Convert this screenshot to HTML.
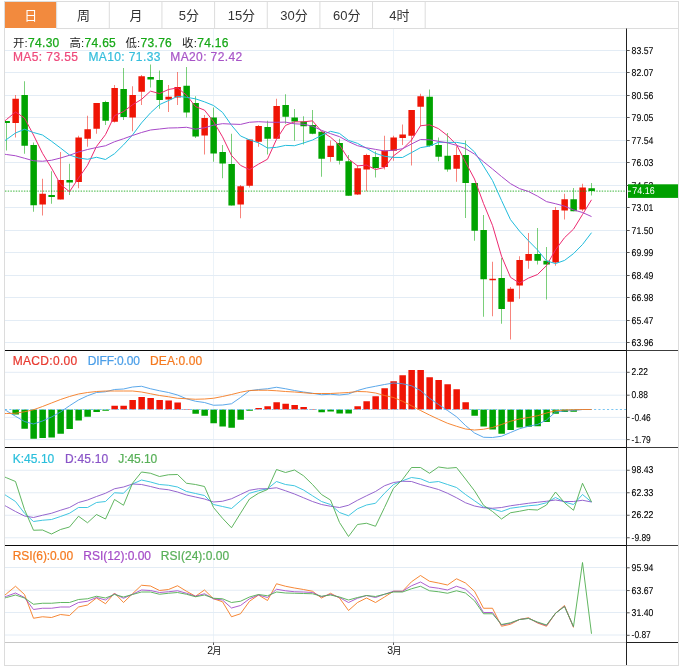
<!DOCTYPE html>
<html lang="zh"><head><meta charset="utf-8"><title>K线图</title>
<style>html,body{margin:0;padding:0;background:#fff}body{width:684px;height:667px;overflow:hidden}</style></head>
<body>
<svg width="684" height="667" viewBox="0 0 684 667" style="display:block;will-change:transform">
<defs><clipPath id="cp"><rect x="5" y="28" width="621.5" height="616"/></clipPath></defs>
<rect width="684" height="667" fill="#fff"/>
<path d="M213.50 28V642.5M393.50 28V642.5" stroke="#ecf3f9" stroke-width="1" fill="none"/>
<path d="M5 50.50H626.5M5 72.50H626.5M5 95.50H626.5M5 117.50H626.5M5 140.50H626.5M5 162.50H626.5M5 185.50H626.5M5 207.50H626.5M5 230.50H626.5M5 252.50H626.5M5 275.50H626.5M5 297.50H626.5M5 320.50H626.5M5 342.50H626.5M5 372.30H626.5M5 395.20H626.5M5 417.40H626.5M5 439.60H626.5M5 470.25H626.5M5 492.75H626.5M5 515.25H626.5M5 537.75H626.5M5 567.50H626.5M5 590.25H626.5M5 612.50H626.5M5 635.00H626.5" stroke="#e3ecf5" stroke-width="1" fill="none"/>
<rect x="4.5" y="1.5" width="674.0" height="664.0" fill="none" stroke="#dcdcdc" stroke-width="1"/>
<rect x="5" y="2" width="51.2" height="26" fill="#f28a3e"/>
<path d="M56.65 2V28M109.30 2V28M161.95 2V28M214.60 2V28M267.25 2V28M319.90 2V28M372.55 2V28M425.20 2V28M56.2 28.5H678" stroke="#dcdcdc" stroke-width="1" fill="none"/>
<g font-family="'Liberation Sans','Noto Sans CJK SC',sans-serif" font-size="13" text-anchor="middle" fill="#333">
<text x="30.8" y="20" fill="#fff">日</text>
<text x="83.5" y="20">周</text>
<text x="136.1" y="20">月</text>
<text x="188.8" y="20">5分</text>
<text x="241.4" y="20">15分</text>
<text x="294.1" y="20">30分</text>
<text x="346.7" y="20">60分</text>
<text x="399.4" y="20">4时</text>
</g>
<path d="M5 350.5H626.5M5 447.5H626.5M5 545.5H626.5" stroke="#0a0a0a" stroke-width="1" fill="none"/>
<path d="M626.5 350.5H678M626.5 447.5H678M626.5 545.5H678" stroke="#3c3c3c" stroke-width="1" fill="none"/>
<path d="M5 642.5H626.5" stroke="#c8c8c8" stroke-width="1" fill="none"/>
<path d="M626.5 642.5H678" stroke="#222" stroke-width="1" fill="none"/>
<g clip-path="url(#cp)">
<path d="M15.50 95.00V137.50M42.50 178.75V215.50M60.50 152.00V199.50M78.50 135.75V188.25M87.50 115.75V146.75M96.50 103.00V133.75M114.50 85.00V122.50M132.50 86.25V131.25M141.50 75.00V105.00M168.50 85.00V112.00M177.50 72.00V105.00M204.50 115.00V154.50M240.50 185.00V218.25M249.50 139.50V187.50M258.50 125.00V146.75M276.50 98.75V138.75M330.50 140.50V161.75M357.50 165.00V195.00M366.50 153.75V191.25M384.50 135.75V169.50M393.50 135.75V160.75M402.50 124.50V145.00M411.50 110.00V165.50M420.50 93.75V126.25M456.50 146.25V181.75M492.50 261.75V316.25M510.50 287.00V339.50M519.50 256.25V298.75M528.50 233.00V268.75M555.50 207.00V265.75M564.50 193.75V219.50M582.50 183.75V211.25" stroke="#ef1505" stroke-width="1" stroke-opacity=".52" fill="none"/>
<path d="M6.50 121.00V150.50M24.50 81.25V153.75M33.50 142.50V211.75M51.50 171.25V203.75M69.50 163.75V195.00M105.50 100.75V125.00M123.50 68.00V120.00M150.50 64.50V87.50M159.50 70.50V108.75M186.50 67.00V117.50M195.50 96.25V138.00M213.50 107.50V161.75M222.50 145.00V178.25M231.50 133.75V205.50M267.50 120.75V154.50M285.50 94.25V123.75M294.50 109.00V140.75M303.50 116.25V144.50M312.50 110.00V134.25M321.50 131.75V176.75M339.50 138.75V164.50M348.50 155.00V195.75M375.50 151.25V177.50M429.50 89.50V146.75M438.50 137.50V161.25M447.50 133.00V171.75M465.50 140.50V218.00M474.50 183.00V240.75M483.50 215.00V316.75M501.50 258.00V323.75M537.50 228.00V264.50M546.50 247.00V299.50M573.50 188.00V211.25M591.50 183.00V195.50" stroke="#00a300" stroke-width="1" stroke-opacity=".52" fill="none"/>
<path d="M12.40 98.75h6.50V123.00h-6.50zM39.40 193.75h6.50V204.50h-6.50zM57.40 180.00h6.50V199.50h-6.50zM75.40 137.50h6.50V182.00h-6.50zM84.40 129.25h6.50V138.75h-6.50zM93.40 103.00h6.50V128.75h-6.50zM111.40 88.00h6.50V121.75h-6.50zM129.40 95.00h6.50V117.50h-6.50zM138.40 76.25h6.50V91.75h-6.50zM165.40 96.75h6.50V99.50h-6.50zM174.40 87.00h6.50V97.50h-6.50zM201.40 118.00h6.50V135.50h-6.50zM237.40 186.25h6.50V204.50h-6.50zM246.40 139.50h6.50V185.75h-6.50zM255.40 126.00h6.50V141.75h-6.50zM273.40 106.00h6.50V138.75h-6.50zM327.40 145.75h6.50V157.00h-6.50zM354.40 168.25h6.50V194.50h-6.50zM363.40 155.00h6.50V169.50h-6.50zM381.40 150.50h6.50V167.00h-6.50zM390.40 137.50h6.50V150.75h-6.50zM399.40 134.50h6.50V138.00h-6.50zM408.40 110.00h6.50V135.75h-6.50zM417.40 96.25h6.50V106.75h-6.50zM453.40 155.00h6.50V168.75h-6.50zM489.40 278.75h6.50V280.25h-6.50zM507.40 288.75h6.50V301.75h-6.50zM516.40 260.00h6.50V285.50h-6.50zM525.40 254.00h6.50V260.75h-6.50zM552.40 210.00h6.50V262.50h-6.50zM561.40 199.25h6.50V210.50h-6.50zM579.40 187.50h6.50V209.50h-6.50z" fill="#ef1505"/>
<path d="M3.40 121.00h6.50V123.00h-6.50zM21.40 95.00h6.50V145.75h-6.50zM30.40 145.00h6.50V205.25h-6.50zM48.40 195.00h6.50V197.00h-6.50zM66.40 180.00h6.50V182.50h-6.50zM102.40 102.00h6.50V120.75h-6.50zM120.40 89.00h6.50V117.00h-6.50zM147.40 77.00h6.50V79.50h-6.50zM156.40 80.00h6.50V100.00h-6.50zM183.40 85.75h6.50V112.50h-6.50zM192.40 103.00h6.50V136.50h-6.50zM210.40 117.50h6.50V153.50h-6.50zM219.40 152.00h6.50V163.50h-6.50zM228.40 164.00h6.50V205.50h-6.50zM264.40 127.00h6.50V138.75h-6.50zM282.40 105.00h6.50V116.75h-6.50zM291.40 117.50h6.50V121.50h-6.50zM300.40 121.50h6.50V126.25h-6.50zM309.40 125.00h6.50V133.75h-6.50zM318.40 131.75h6.50V158.75h-6.50zM336.40 143.00h6.50V160.75h-6.50zM345.40 161.25h6.50V195.75h-6.50zM372.40 157.00h6.50V168.00h-6.50zM426.40 96.75h6.50V145.75h-6.50zM435.40 145.00h6.50V156.75h-6.50zM444.40 155.75h6.50V169.50h-6.50zM462.40 155.00h6.50V183.00h-6.50zM471.40 183.00h6.50V230.75h-6.50zM480.40 230.00h6.50V279.25h-6.50zM498.40 278.00h6.50V309.00h-6.50zM534.40 254.00h6.50V260.75h-6.50zM543.40 260.75h6.50V264.50h-6.50zM570.40 199.25h6.50V211.25h-6.50zM588.40 188.25h6.50V191.00h-6.50z" fill="#00a300"/>
<path d="M5 191.2H626.5" stroke="#00a000" stroke-opacity=".62" stroke-width="1.2" stroke-dasharray="1.45 1.25" fill="none"/>
<polyline points="4.00,121.58 6.50,119.50 15.50,112.00 24.50,118.00 33.50,135.00 42.50,153.30 51.50,168.10 60.50,184.35 69.50,191.70 78.50,178.15 87.50,165.25 96.50,146.45 105.50,134.60 114.50,115.70 123.50,111.60 132.50,104.75 141.50,99.40 150.50,91.15 159.50,93.55 168.50,89.50 177.50,87.90 186.50,95.15 195.50,106.55 204.50,110.15 213.50,121.50 222.50,136.80 231.50,155.40 240.50,165.35 249.50,169.65 258.50,164.15 267.50,159.20 276.50,139.30 285.50,125.40 294.50,121.80 303.50,121.85 312.50,120.85 321.50,131.40 330.50,137.20 339.50,145.05 348.50,158.95 357.50,165.85 366.50,165.10 375.50,169.55 384.50,167.50 393.50,155.85 402.50,149.10 411.50,140.10 420.50,125.75 429.50,124.80 438.50,128.65 447.50,135.65 456.50,144.65 465.50,162.00 474.50,179.00 483.50,203.50 492.50,225.35 501.50,256.15 510.50,277.30 519.50,283.15 528.50,278.10 537.50,274.50 546.50,265.60 555.50,249.85 564.50,237.70 573.50,229.15 582.50,214.50 591.50,199.80" fill="none" stroke="#ec2a70" stroke-width="1.0" stroke-linejoin="round"/>
<polyline points="4.00,141.31 6.50,139.50 15.50,133.00 24.50,129.25 33.50,132.50 42.50,135.00 51.50,141.25 60.50,148.00 69.50,155.00 78.50,158.00 87.50,159.28 96.50,157.28 105.50,159.47 114.50,153.70 123.50,144.88 132.50,135.00 141.50,122.92 150.50,112.88 159.50,104.62 168.50,100.55 177.50,96.33 186.50,97.28 195.50,98.85 204.50,101.85 213.50,105.50 222.50,112.35 231.50,125.28 240.50,135.95 249.50,139.90 258.50,142.82 267.50,148.00 276.50,147.35 285.50,145.38 294.50,145.72 303.50,143.00 312.50,140.03 321.50,135.35 330.50,131.30 339.50,133.43 348.50,140.40 357.50,143.35 366.50,148.25 375.50,153.38 384.50,156.28 393.50,157.40 402.50,157.47 411.50,152.60 420.50,147.65 429.50,146.15 438.50,142.25 447.50,142.38 456.50,142.38 465.50,143.88 474.50,151.90 483.50,166.07 492.50,180.50 501.50,200.40 510.50,219.65 519.50,231.07 528.50,240.80 537.50,249.93 546.50,260.88 555.50,263.57 564.50,260.43 573.50,253.62 582.50,244.50 591.50,232.70" fill="none" stroke="#22bcdc" stroke-width="1.0" stroke-linejoin="round"/>
<polyline points="4.00,154.15 6.50,154.50 15.50,155.75 24.50,158.25 33.50,160.75 42.50,161.25 51.50,160.25 60.50,158.00 69.50,155.25 78.50,152.00 87.50,149.50 96.50,147.50 105.50,145.75 114.50,141.75 123.50,138.75 132.50,135.50 141.50,132.50 150.50,130.00 159.50,129.00 168.50,128.00 177.50,127.80 186.50,127.28 195.50,129.16 204.50,127.78 213.50,125.19 222.50,123.67 231.50,124.10 240.50,124.41 249.50,122.26 258.50,121.69 267.50,122.16 276.50,122.31 285.50,122.11 294.50,123.79 303.50,124.25 312.50,126.19 321.50,130.31 330.50,133.62 339.50,136.66 348.50,141.61 357.50,145.68 366.50,147.80 375.50,149.38 384.50,151.00 393.50,150.20 402.50,148.75 411.50,143.97 420.50,139.47 429.50,139.79 438.50,141.32 447.50,142.86 456.50,145.31 465.50,148.62 474.50,154.09 483.50,161.74 492.50,168.99 501.50,176.50 510.50,183.65 519.50,188.61 528.50,191.53 537.50,196.15 546.50,201.62 555.50,203.72 564.50,206.16 573.50,209.85 582.50,212.50 591.50,216.55" fill="none" stroke="#a848c8" stroke-width="1.0" stroke-linejoin="round"/>
<path d="M111.40 405.75h6.50V409.50h-6.50zM120.40 405.75h6.50V409.50h-6.50zM129.40 400.00h6.50V409.50h-6.50zM138.40 397.00h6.50V409.50h-6.50zM147.40 398.00h6.50V409.50h-6.50zM156.40 400.00h6.50V409.50h-6.50zM165.40 400.50h6.50V409.50h-6.50zM174.40 402.50h6.50V409.50h-6.50zM183.40 409.00h6.50V409.50h-6.50zM255.40 408.00h6.50V409.50h-6.50zM264.40 406.25h6.50V409.50h-6.50zM273.40 402.25h6.50V409.50h-6.50zM282.40 403.75h6.50V409.50h-6.50zM291.40 405.00h6.50V409.50h-6.50zM300.40 407.00h6.50V409.50h-6.50zM309.40 409.00h6.50V409.50h-6.50zM354.40 406.25h6.50V409.50h-6.50zM363.40 401.25h6.50V409.50h-6.50zM372.40 396.25h6.50V409.50h-6.50zM381.40 388.25h6.50V409.50h-6.50zM390.40 381.25h6.50V409.50h-6.50zM399.40 375.25h6.50V409.50h-6.50zM408.40 370.00h6.50V409.50h-6.50zM417.40 370.00h6.50V409.50h-6.50zM426.40 377.25h6.50V409.50h-6.50zM435.40 380.00h6.50V409.50h-6.50zM444.40 384.25h6.50V409.50h-6.50zM453.40 389.25h6.50V409.50h-6.50zM462.40 402.25h6.50V409.50h-6.50z" fill="#ef1505"/>
<path d="M12.40 409.50h6.50V414.50h-6.50zM21.40 409.50h6.50V428.75h-6.50zM30.40 409.50h6.50V438.75h-6.50zM39.40 409.50h6.50V438.00h-6.50zM48.40 409.50h6.50V437.50h-6.50zM57.40 409.50h6.50V433.75h-6.50zM66.40 409.50h6.50V429.00h-6.50zM75.40 409.50h6.50V420.50h-6.50zM84.40 409.50h6.50V416.75h-6.50zM93.40 409.50h6.50V412.00h-6.50zM102.40 409.50h6.50V410.75h-6.50zM192.40 409.50h6.50V413.75h-6.50zM201.40 409.50h6.50V415.75h-6.50zM210.40 409.50h6.50V423.25h-6.50zM219.40 409.50h6.50V426.50h-6.50zM228.40 409.50h6.50V427.75h-6.50zM237.40 409.50h6.50V419.75h-6.50zM246.40 409.50h6.50V410.75h-6.50zM318.40 409.50h6.50V412.25h-6.50zM327.40 409.50h6.50V411.50h-6.50zM336.40 409.50h6.50V413.50h-6.50zM345.40 409.50h6.50V413.50h-6.50zM471.40 409.50h6.50V415.75h-6.50zM480.40 409.50h6.50V426.50h-6.50zM489.40 409.50h6.50V429.50h-6.50zM498.40 409.50h6.50V433.75h-6.50zM507.40 409.50h6.50V430.00h-6.50zM516.40 409.50h6.50V427.50h-6.50zM525.40 409.50h6.50V426.75h-6.50zM534.40 409.50h6.50V426.25h-6.50zM543.40 409.50h6.50V422.00h-6.50zM552.40 409.50h6.50V413.75h-6.50zM561.40 409.50h6.50V412.00h-6.50zM570.40 409.50h6.50V411.75h-6.50z" fill="#00a300"/>
<path d="M5 409.5H626.5" stroke="#7cc6f2" stroke-width="1" stroke-dasharray="2.1 2.2" fill="none"/>
<polyline points="4.00,409.22 6.50,410.75 15.50,416.25 24.50,421.50 33.50,424.00 42.50,421.00 51.50,417.00 60.50,412.00 69.50,405.75 78.50,400.00 87.50,395.75 96.50,392.50 105.50,391.75 114.50,389.50 123.50,389.00 132.50,387.00 141.50,386.25 150.50,388.75 159.50,390.75 168.50,392.50 177.50,395.00 186.50,398.75 195.50,401.25 204.50,402.50 213.50,405.25 222.50,405.00 231.50,403.75 240.50,397.50 249.50,390.75 258.50,389.50 267.50,388.75 276.50,387.25 285.50,388.75 294.50,390.50 303.50,392.00 312.50,393.25 321.50,394.75 330.50,394.25 339.50,395.00 348.50,394.00 357.50,390.50 366.50,388.00 375.50,386.25 384.50,384.50 393.50,383.00 402.50,383.75 411.50,385.75 420.50,390.50 429.50,398.25 438.50,404.50 447.50,410.50 456.50,416.75 465.50,425.50 474.50,433.00 483.50,437.25 492.50,437.50 501.50,436.25 510.50,432.50 519.50,428.75 528.50,426.25 537.50,424.50 546.50,420.00 555.50,412.00 564.50,411.00 573.50,410.50 582.50,409.50 591.50,409.50" fill="none" stroke="#4a9ee8" stroke-width="0.9" stroke-linejoin="round"/>
<polyline points="4.00,413.57 6.50,413.50 15.50,413.25 24.50,411.75 33.50,409.75 42.50,406.50 51.50,403.00 60.50,399.50 69.50,396.50 78.50,394.00 87.50,392.50 96.50,391.50 105.50,391.00 114.50,391.00 123.50,391.00 132.50,391.00 141.50,392.00 150.50,393.75 159.50,395.50 168.50,396.75 177.50,398.25 186.50,398.75 195.50,399.25 204.50,399.00 213.50,398.25 222.50,396.50 231.50,394.50 240.50,392.25 249.50,390.50 258.50,390.25 267.50,390.25 276.50,390.75 285.50,391.50 294.50,392.00 303.50,392.75 312.50,393.50 321.50,393.50 330.50,393.50 339.50,393.00 348.50,392.50 357.50,391.50 366.50,391.75 375.50,393.00 384.50,395.50 393.50,397.50 402.50,401.25 411.50,405.75 420.50,410.50 429.50,415.00 438.50,419.25 447.50,423.25 456.50,426.25 465.50,429.00 474.50,430.00 483.50,429.25 492.50,427.50 501.50,424.50 510.50,421.25 519.50,419.00 528.50,417.50 537.50,415.75 546.50,413.00 555.50,410.75 564.50,410.00 573.50,409.75 582.50,409.50 591.50,409.50" fill="none" stroke="#f57a20" stroke-width="0.9" stroke-linejoin="round"/>
<polyline points="4.00,494.15 6.50,495.75 15.50,501.50 24.50,513.25 33.50,521.50 42.50,520.25 51.50,519.50 60.50,516.50 69.50,513.25 78.50,507.50 87.50,507.50 96.50,502.50 105.50,501.50 114.50,492.75 123.50,493.25 132.50,484.00 141.50,480.00 150.50,482.00 159.50,484.50 168.50,485.25 177.50,487.00 186.50,491.50 195.50,493.50 204.50,495.50 213.50,504.50 222.50,506.50 231.50,508.50 240.50,500.75 249.50,493.25 258.50,490.75 267.50,488.75 276.50,481.50 285.50,484.50 294.50,485.75 303.50,490.00 312.50,495.75 321.50,501.50 330.50,504.50 339.50,512.50 348.50,515.75 357.50,508.75 366.50,505.00 375.50,503.25 384.50,493.25 393.50,484.50 402.50,480.75 411.50,477.50 420.50,478.75 429.50,482.50 438.50,481.50 447.50,484.50 456.50,487.50 465.50,494.50 474.50,500.75 483.50,507.00 492.50,509.00 501.50,511.50 510.50,508.25 519.50,507.00 528.50,505.75 537.50,505.00 546.50,502.75 555.50,497.50 564.50,502.00 573.50,504.50 582.50,494.50 591.50,502.00" fill="none" stroke="#2bbfdc" stroke-width="0.9" stroke-linejoin="round"/>
<polyline points="4.00,505.11 6.50,506.50 15.50,511.50 24.50,516.00 33.50,517.50 42.50,515.25 51.50,513.25 60.50,510.25 69.50,507.50 78.50,502.50 87.50,500.00 96.50,496.50 105.50,493.25 114.50,488.75 123.50,487.00 132.50,484.00 141.50,484.50 150.50,486.50 159.50,488.75 168.50,489.75 177.50,492.00 186.50,495.00 195.50,497.00 204.50,499.00 213.50,502.00 222.50,501.25 231.50,498.75 240.50,494.50 249.50,490.25 258.50,488.75 267.50,488.75 276.50,487.75 285.50,490.75 294.50,494.00 303.50,497.75 312.50,501.50 321.50,504.50 330.50,506.25 339.50,507.50 348.50,505.25 357.50,500.25 366.50,495.75 375.50,491.50 384.50,485.75 393.50,482.50 402.50,481.25 411.50,481.50 420.50,484.50 429.50,487.00 438.50,489.50 447.50,493.25 456.50,497.75 465.50,502.75 474.50,506.00 483.50,507.75 492.50,508.25 501.50,507.50 510.50,505.75 519.50,504.50 528.50,503.25 537.50,502.25 546.50,501.25 555.50,500.00 564.50,501.50 573.50,501.50 582.50,500.25 591.50,502.00" fill="none" stroke="#8a55c8" stroke-width="0.9" stroke-linejoin="round"/>
<polyline points="4.00,476.71 6.50,477.75 15.50,481.50 24.50,509.50 33.50,530.25 42.50,530.00 51.50,534.00 60.50,529.50 69.50,527.00 78.50,516.25 87.50,522.75 96.50,514.50 105.50,519.00 114.50,499.50 123.50,505.25 132.50,483.25 141.50,472.00 150.50,473.25 159.50,476.50 168.50,474.75 177.50,474.50 186.50,483.25 195.50,484.50 204.50,486.50 213.50,507.50 222.50,518.25 231.50,527.75 240.50,513.25 249.50,499.00 258.50,493.25 267.50,489.50 276.50,469.50 285.50,472.50 294.50,470.00 303.50,475.75 312.50,484.50 321.50,494.50 330.50,500.00 339.50,522.50 348.50,536.50 357.50,524.50 366.50,523.25 375.50,526.25 384.50,507.50 393.50,488.25 402.50,479.50 411.50,467.50 420.50,467.50 429.50,473.25 438.50,467.00 447.50,468.25 456.50,467.50 465.50,479.00 474.50,490.75 483.50,505.25 492.50,511.50 501.50,519.00 510.50,512.75 519.50,511.25 528.50,509.50 537.50,510.00 546.50,505.00 555.50,492.00 564.50,502.75 573.50,510.25 582.50,483.25 591.50,502.00" fill="none" stroke="#4fae4f" stroke-width="0.9" stroke-linejoin="round"/>
<polyline points="4.00,595.83 6.50,593.75 15.50,586.25 24.50,594.50 33.50,618.25 42.50,616.75 51.50,617.50 60.50,614.50 69.50,615.50 78.50,607.00 87.50,605.00 96.50,598.00 105.50,603.75 114.50,593.00 123.50,602.50 132.50,593.75 141.50,585.25 150.50,586.00 159.50,590.50 168.50,589.50 177.50,585.75 186.50,591.25 195.50,596.25 204.50,590.00 213.50,598.75 222.50,601.75 231.50,616.75 240.50,613.75 249.50,601.25 258.50,595.00 267.50,600.50 276.50,583.75 285.50,586.25 294.50,588.00 303.50,589.50 312.50,591.25 321.50,598.00 330.50,593.25 339.50,598.00 348.50,610.50 357.50,602.50 366.50,598.00 375.50,602.50 384.50,597.00 393.50,591.25 402.50,591.25 411.50,581.75 420.50,575.50 429.50,581.25 438.50,583.00 447.50,585.00 456.50,578.75 465.50,583.00 474.50,591.25 483.50,608.25 492.50,608.25 501.50,626.25 510.50,624.25 519.50,619.50 528.50,617.75 537.50,623.00 546.50,626.25 555.50,613.25 564.50,605.50 573.50,627.50" fill="none" stroke="#f57a20" stroke-width="0.9" stroke-linejoin="round"/>
<polyline points="4.00,597.15 6.50,596.25 15.50,593.00 24.50,597.50 33.50,609.50 42.50,608.25 51.50,608.25 60.50,607.00 69.50,607.00 78.50,602.50 87.50,601.25 96.50,597.50 105.50,600.00 114.50,593.75 123.50,598.25 132.50,594.25 141.50,590.00 150.50,590.50 159.50,592.50 168.50,591.75 177.50,590.75 186.50,593.25 195.50,596.25 204.50,593.75 213.50,598.75 222.50,600.00 231.50,608.00 240.50,605.50 249.50,598.75 258.50,595.00 267.50,597.50 276.50,589.25 285.50,590.75 294.50,591.75 303.50,592.00 312.50,592.50 321.50,596.75 330.50,594.25 339.50,597.50 348.50,602.50 357.50,598.25 366.50,595.50 375.50,597.50 384.50,594.25 393.50,591.25 402.50,591.25 411.50,585.75 420.50,582.00 429.50,587.00 438.50,588.25 447.50,590.00 456.50,586.25 465.50,589.25 474.50,597.50 483.50,612.50 492.50,612.50 501.50,625.00 510.50,623.25 519.50,619.50 528.50,618.25 537.50,622.50 546.50,625.50 555.50,613.25 564.50,606.25 573.50,627.00" fill="none" stroke="#a64dc8" stroke-width="0.9" stroke-linejoin="round"/>
<polyline points="4.00,598.19 6.50,597.50 15.50,595.00 24.50,598.00 33.50,604.25 42.50,603.25 51.50,603.25 60.50,602.50 69.50,602.50 78.50,599.50 87.50,598.75 96.50,596.25 105.50,598.00 114.50,594.50 123.50,597.00 132.50,594.50 141.50,592.00 150.50,592.00 159.50,594.25 168.50,593.25 177.50,592.50 186.50,594.25 195.50,596.75 204.50,595.00 213.50,598.25 222.50,598.75 231.50,602.50 240.50,601.25 249.50,597.00 258.50,594.50 267.50,595.75 276.50,592.00 285.50,593.00 294.50,593.25 303.50,593.50 312.50,593.75 321.50,596.25 330.50,595.00 339.50,597.00 348.50,600.00 357.50,597.50 366.50,595.50 375.50,596.50 384.50,594.25 393.50,592.00 402.50,592.00 411.50,588.75 420.50,586.25 429.50,590.75 438.50,591.75 447.50,593.25 456.50,590.75 465.50,593.00 474.50,600.75 483.50,613.75 492.50,613.75 501.50,624.50 510.50,622.75 519.50,619.50 528.50,618.50 537.50,622.00 546.50,625.00 555.50,613.25 564.50,606.50 573.50,626.50 582.50,562.50 591.50,633.75" fill="none" stroke="#4fae4f" stroke-width="0.9" stroke-linejoin="round"/>
</g>
<path d="M626.5 28.5V665" stroke="#222" stroke-width="1" fill="none"/>
<g font-family="'Liberation Sans',sans-serif" font-size="9.9" text-rendering="geometricPrecision" fill="#000" stroke="#000" stroke-width=".1">
<text x="631.6" y="53.6" textLength="21.8" lengthAdjust="spacingAndGlyphs">83.57</text>
<text x="631.6" y="75.6" textLength="21.8" lengthAdjust="spacingAndGlyphs">82.07</text>
<text x="631.6" y="98.6" textLength="21.8" lengthAdjust="spacingAndGlyphs">80.56</text>
<text x="631.6" y="120.6" textLength="21.8" lengthAdjust="spacingAndGlyphs">79.05</text>
<text x="631.6" y="143.6" textLength="21.8" lengthAdjust="spacingAndGlyphs">77.54</text>
<text x="631.6" y="165.6" textLength="21.8" lengthAdjust="spacingAndGlyphs">76.03</text>
<text x="631.6" y="188.6" textLength="21.8" lengthAdjust="spacingAndGlyphs">74.53</text>
<text x="631.6" y="210.6" textLength="21.8" lengthAdjust="spacingAndGlyphs">73.01</text>
<text x="631.6" y="233.6" textLength="21.8" lengthAdjust="spacingAndGlyphs">71.50</text>
<text x="631.6" y="255.6" textLength="21.8" lengthAdjust="spacingAndGlyphs">69.99</text>
<text x="631.6" y="278.6" textLength="21.8" lengthAdjust="spacingAndGlyphs">68.49</text>
<text x="631.6" y="300.6" textLength="21.8" lengthAdjust="spacingAndGlyphs">66.98</text>
<text x="631.6" y="323.6" textLength="21.8" lengthAdjust="spacingAndGlyphs">65.47</text>
<text x="631.6" y="345.6" textLength="21.8" lengthAdjust="spacingAndGlyphs">63.96</text>
<text x="631.6" y="375.4" textLength="16.4" lengthAdjust="spacingAndGlyphs">2.22</text>
<text x="631.6" y="398.3" textLength="16.4" lengthAdjust="spacingAndGlyphs">0.88</text>
<text x="631.6" y="420.5" textLength="19.2" lengthAdjust="spacingAndGlyphs">-0.46</text>
<text x="631.6" y="442.7" textLength="19.2" lengthAdjust="spacingAndGlyphs">-1.79</text>
<text x="631.6" y="473.4" textLength="21.8" lengthAdjust="spacingAndGlyphs">98.43</text>
<text x="631.6" y="495.9" textLength="21.8" lengthAdjust="spacingAndGlyphs">62.33</text>
<text x="631.6" y="518.4" textLength="21.8" lengthAdjust="spacingAndGlyphs">26.22</text>
<text x="631.6" y="540.9" textLength="19.2" lengthAdjust="spacingAndGlyphs">-9.89</text>
<text x="631.6" y="570.9" textLength="21.8" lengthAdjust="spacingAndGlyphs">95.94</text>
<text x="631.6" y="593.6" textLength="21.8" lengthAdjust="spacingAndGlyphs">63.67</text>
<text x="631.6" y="615.9" textLength="21.8" lengthAdjust="spacingAndGlyphs">31.40</text>
<text x="631.6" y="638.4" textLength="19.2" lengthAdjust="spacingAndGlyphs">-0.87</text>
</g>
<path d="M626.5 50.50h3.2M626.5 72.50h3.2M626.5 95.50h3.2M626.5 117.50h3.2M626.5 140.50h3.2M626.5 162.50h3.2M626.5 185.50h3.2M626.5 207.50h3.2M626.5 230.50h3.2M626.5 252.50h3.2M626.5 275.50h3.2M626.5 297.50h3.2M626.5 320.50h3.2M626.5 342.50h3.2M626.5 372.30h3.2M626.5 395.20h3.2M626.5 417.40h3.2M626.5 439.60h3.2M626.5 470.25h3.2M626.5 492.75h3.2M626.5 515.25h3.2M626.5 537.75h3.2M626.5 567.80h3.2M626.5 590.55h3.2M626.5 612.80h3.2M626.5 635.30h3.2" stroke="#555" stroke-width="1" fill="none"/>
<rect x="628" y="184.3" width="50" height="13.6" fill="#00a000"/>
<path d="M627 191.2h4" stroke="#fff" stroke-width="1"/>
<text x="632.3" y="194.3" font-family="'Liberation Sans',sans-serif" font-size="9.9" text-rendering="geometricPrecision" fill="#fff" textLength="22.3" lengthAdjust="spacingAndGlyphs">74.16</text>
<path d="M213.50 642.5v2.5M393.50 642.5v2.5" stroke="#555" stroke-width="1" fill="none"/>
<g font-family="'Liberation Sans','Noto Sans CJK SC',sans-serif" font-size="9" fill="#111" text-anchor="middle">
<text x="207.3" y="654.2" text-anchor="start"><tspan font-size="10.5">2</tspan><tspan font-size="9" dx="-0.6">月</tspan></text>
<text x="387.3" y="654.2" text-anchor="start"><tspan font-size="10.5">3</tspan><tspan font-size="9" dx="-0.6">月</tspan></text>
</g>
<g font-family="'Liberation Sans','Noto Sans CJK SC',sans-serif" font-size="12">
<text x="12.9" y="47.3" fill="#222" textLength="46.4"><tspan font-size="11.4">开:</tspan><tspan fill="#17a817" stroke="#17a817" stroke-width=".25">74.30</tspan></text>
<text x="69.4" y="47.3" fill="#222" textLength="46.4"><tspan font-size="11.4">高:</tspan><tspan fill="#17a817" stroke="#17a817" stroke-width=".25">74.65</tspan></text>
<text x="125.4" y="47.3" fill="#222" textLength="46.4"><tspan font-size="11.4">低:</tspan><tspan fill="#17a817" stroke="#17a817" stroke-width=".25">73.76</tspan></text>
<text x="182.0" y="47.3" fill="#222" textLength="46.4"><tspan font-size="11.4">收:</tspan><tspan fill="#17a817" stroke="#17a817" stroke-width=".25">74.16</tspan></text>
<text x="12.9" y="60.8" fill="#ee4a7c" stroke="#ee4a7c" stroke-width=".22" textLength="65.1">MA5: 73.55</text>
<text x="88.4" y="60.8" fill="#35bedc" stroke="#35bedc" stroke-width=".22" textLength="72.0">MA10: 71.33</text>
<text x="170.3" y="60.8" fill="#a855c8" stroke="#a855c8" stroke-width=".22" textLength="71.9">MA20: 72.42</text>
<text x="12.7" y="365.0" fill="#e83a30" stroke="#e83a30" stroke-width=".22" textLength="64.6">MACD:0.00</text>
<text x="87.7" y="365.0" fill="#4a9ee8" stroke="#4a9ee8" stroke-width=".22" textLength="52.3">DIFF:0.00</text>
<text x="150.0" y="365.0" fill="#f57a20" stroke="#f57a20" stroke-width=".22" textLength="52.3">DEA:0.00</text>
<text x="12.7" y="463.0" fill="#2bbfdc" stroke="#2bbfdc" stroke-width=".22" textLength="41.6">K:45.10</text>
<text x="65.0" y="463.0" fill="#8a55c8" stroke="#8a55c8" stroke-width=".22" textLength="43.3">D:45.10</text>
<text x="118.3" y="463.0" fill="#58b058" stroke="#58b058" stroke-width=".22" textLength="39.0">J:45.10</text>
<text x="12.8" y="560.0" fill="#f57a20" stroke="#f57a20" stroke-width=".22" textLength="60.3">RSI(6):0.00</text>
<text x="83.3" y="560.0" fill="#a64dc8" stroke="#a64dc8" stroke-width=".22" textLength="67.7">RSI(12):0.00</text>
<text x="160.8" y="560.0" fill="#58b058" stroke="#58b058" stroke-width=".22" textLength="68.4">RSI(24):0.00</text>
</g>
</svg>
</body></html>
